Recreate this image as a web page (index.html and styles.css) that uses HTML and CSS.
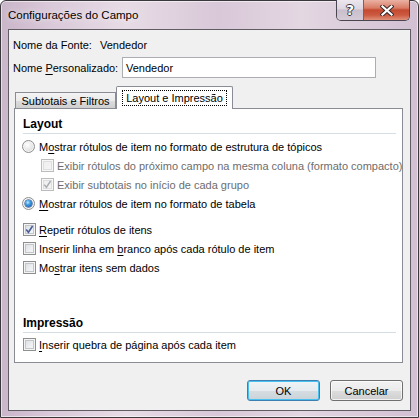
FILE: index.html
```html
<!DOCTYPE html>
<html lang="pt">
<head>
<meta charset="utf-8">
<title>Configurações do Campo</title>
<link rel="stylesheet" href="styles.css">
</head>
<body>
<div class="window">
  <div class="titlebar">
    <span class="title">Configurações do Campo</span>
    <div class="caption">
      <div class="cbtn help"><span class="q">?</span></div>
      <div class="cbtn close">
        <svg width="14" height="11" viewBox="0 0 14 11">
          <path d="M2.5 1.5 L11.5 9.5 M11.5 1.5 L2.5 9.5" stroke="#3a2a28" stroke-width="4.2" stroke-linecap="square" fill="none"/>
          <path d="M2.5 1.5 L11.5 9.5 M11.5 1.5 L2.5 9.5" stroke="#ffffff" stroke-width="2.2" stroke-linecap="square" fill="none"/>
        </svg>
      </div>
    </div>
  </div>
  <div class="client">
    <div class="row src">
      <span class="lbl">Nome da Fonte:</span>
      <span class="val">Vendedor</span>
    </div>
    <div class="row custom">
      <span class="lbl2">Nome <u>P</u>ersonalizado:</span>
      <div class="textbox">Vendedor</div>
    </div>
    <div class="tabs">
      <div class="tab">Subtotais e Filtros</div>
      <div class="tab active"><span class="focus">Layout e Impressão</span></div>
    </div>
    <div class="panel">
      <div class="group-title">Layout</div>
      <div class="opt first">
        <span class="rb"></span><span class="txt">M<u>o</u>strar rótulos de item no formato de estrutura de tópicos</span>
      </div>
      <div class="opt sub disabled">
        <span class="cb"></span><span class="txt">Exibir rótulos do próximo campo na mesma coluna (formato compacto)</span>
      </div>
      <div class="opt sub disabled">
        <span class="cb"><svg width="11" height="11" viewBox="0 0 11 11"><path d="M2.2 5.6 L4.4 8.3 L8.6 2" stroke="#a9acb0" stroke-width="1.5" fill="none"/></svg></span><span class="txt">Exibir subtotais no início de cada grupo</span>
      </div>
      <div class="opt">
        <span class="rb on"><span class="dot"></span></span><span class="txt"><u>M</u>ostrar rótulos de item no formato de tabela</span>
      </div>
      <div class="opt gap">
        <span class="cb"><svg width="11" height="11" viewBox="0 0 11 11"><path d="M2.2 5.6 L4.4 8.3 L8.6 2" stroke="#4a5f97" stroke-width="1.6" fill="none"/></svg></span><span class="txt"><u>R</u>epetir rótulos de itens</span>
      </div>
      <div class="opt">
        <span class="cb"></span><span class="txt">Inserir linha em <u>b</u>ranco após cada rótulo de item</span>
      </div>
      <div class="opt">
        <span class="cb"></span><span class="txt">Mo<u>s</u>trar itens sem dados</span>
      </div>
      <div class="group-title second">Impressão</div>
      <div class="opt after">
        <span class="cb"></span><span class="txt"><u>I</u>nserir quebra de página após cada item</span>
      </div>
    </div>
    <div class="buttons">
      <div class="btn default">OK</div>
      <div class="btn">Cancelar</div>
    </div>
  </div>
</div>
</body>
</html>
```
FILE: styles.css
```css
* { box-sizing: border-box; }
html, body { margin: 0; padding: 0; background: #ffffff; }
body {
  font-family: "Liberation Sans", Arial, sans-serif;
  font-size: 11px;
  color: #000;
  white-space: nowrap;
}
u { text-decoration: underline; text-underline-offset: 2px; }

.window {
  width: 419px;
  height: 418px;
  border: 1px solid #3a383c;
  border-radius: 6px 6px 0 0;
  background: linear-gradient(90deg, #c9b6c9 0%, #dac9d9 12%, #e7dce6 30%, #d9c8d8 52%, #e3d7e2 72%, #d2c0d2 100%);
  box-shadow: inset 0 0 0 1px rgba(255,255,255,0.55);
  display: flex;
  flex-direction: column;
}

.titlebar {
  height: 28px;
  display: flex;
  justify-content: space-between;
  align-items: flex-start;
  padding: 0 8px 0 7px;
}
.title {
  font-size: 11.5px;
  line-height: 28px;
  color: #000;
  text-shadow: 0 0 6px rgba(255,255,255,0.9);
}
.caption {
  display: flex;
  margin-top: -1px;
  border: 1px solid #4a4550;
  border-top: none;
  border-radius: 0 0 5px 5px;
  overflow: hidden;
}
.cbtn {
  height: 20px;
  display: flex;
  align-items: center;
  justify-content: center;
}
.help {
  width: 27px;
  border-right: 1px solid #6d6570;
  background: linear-gradient(180deg, #ece6ee 0%, #ddd5e0 45%, #c9bfcc 50%, #d4cbd7 100%);
}
.help .q {
  font-family: "DejaVu Sans", sans-serif;
  font-weight: bold;
  font-size: 14px;
  color: #fff;
  line-height: 1;
  text-shadow: 1px 0 0 #3d3540, -1px 0 0 #3d3540, 0 1px 0 #3d3540, 0 -1px 0 #3d3540;
}
.close {
  width: 45px;
  background: linear-gradient(180deg, #eab2a4 0%, #d97c66 40%, #c44a31 50%, #cc5a40 75%, #e0907a 100%);
}

.client {
  flex: 1;
  margin: 0 7px 6px 7px;
  border: 1px solid #5f5c63;
  background: #f0f0f0;
  padding: 4px 7px 0 5px;
  display: flex;
  flex-direction: column;
}

.row {
  height: 21px;
  display: flex;
  align-items: center;
  margin-left: -1px;
}
.row.custom { margin-top: 2px; }
.lbl { width: 87px; flex: none; }
.lbl2 { width: 109px; flex: none; }
.textbox {
  width: 254px;
  height: 21px;
  flex: none;
  border: 1px solid #abadb3;
  background: #fff;
  padding-left: 3px;
  display: flex;
  align-items: center;
}

.tabs {
  margin-top: 8px;
  height: 23px;
  margin-bottom: -1px;
  display: flex;
  align-items: flex-end;
  padding-left: 1px;
  position: relative;
  z-index: 1;
}
.tab {
  height: 16px;
  margin-bottom: 1px;
  width: 101px;
  flex: none;
  border: 1px solid #898c95;
  border-bottom: none;
  background: linear-gradient(180deg, #f3f3f3 0%, #ebebeb 50%, #dddddd 51%, #cfcfcf 100%);
  display: flex;
  align-items: center;
  justify-content: center;
}
.tab.active {
  width: 117px;
  height: 23px;
  margin-bottom: 0;
  background: #fff;
  border-radius: 2px 2px 0 0;
  padding-bottom: 1px;
}
.focus {
  outline: 1px dotted #000;
  outline-offset: 0;
  padding: 0 3px;
  line-height: 14px;
}

.panel {
  height: 255px;
  border: 1px solid #898c95;
  background: #fff;
  padding: 0 6px 0 8px;
  display: flex;
  flex-direction: column;
}
.group-title {
  margin-top: 6px;
  height: 19px;
  font-size: 12px;
  font-weight: bold;
  display: flex;
  align-items: center;
  border-bottom: 1px solid #d5dde5;
}
.group-title.second { margin-top: 37px; }

.opt {
  height: 19px;
  display: flex;
  align-items: center;
}
.opt .txt { flex: none; }
.opt.first { margin-top: 3px; }
.opt.gap { margin-top: 7px; }
.opt.after { margin-top: 2px; }
.opt.sub { padding-left: 18px; }
.opt.disabled { color: #6d6d6d; }

.cb {
  width: 13px;
  height: 13px;
  flex: none;
  margin-right: 3px;
  border: 1px solid #8e8f8f;
  background: linear-gradient(135deg, #d7dbe0 0%, #eceef0 55%, #fafafa 100%);
  box-shadow: inset 0 0 0 1px #f4f4f4, inset 0 0 0 2px #c2c6cb;
  display: flex;
  align-items: center;
  justify-content: center;
}
.disabled .cb {
  border-color: #bcbcbc;
  background: linear-gradient(135deg, #ecedee 0%, #f6f6f6 100%);
  box-shadow: inset 0 0 0 1px #f7f7f7, inset 0 0 0 2px #dcdee0;
}
.rb {
  width: 13px;
  height: 13px;
  flex: none;
  margin-right: 4px;
  margin-left: -1px;
  border-radius: 50%;
  border: 1px solid #8e8f8f;
  background: radial-gradient(circle at 40% 35%, #ffffff 0%, #e9e9e9 45%, #cfd1d4 100%);
  box-shadow: inset 0 0 0 1px #f6f6f6;
  display: flex;
  align-items: center;
  justify-content: center;
}
.rb .dot {
  width: 7px;
  height: 7px;
  border-radius: 50%;
  background: radial-gradient(circle at 40% 35%, #bfeaff 0%, #3c9ae0 40%, #11479c 100%);
  box-shadow: 0 0 0 0.5px #0f3f86;
}

.buttons {
  margin-top: 17px;
  display: flex;
  justify-content: flex-end;
  gap: 10px;
}
.btn {
  width: 73px;
  height: 21px;
  border: 1px solid #707070;
  border-radius: 3px;
  background: linear-gradient(180deg, #f2f2f2 0%, #ebebeb 50%, #dddddd 51%, #cfcfcf 100%);
  box-shadow: inset 0 0 0 1px rgba(255,255,255,0.7);
  display: flex;
  align-items: center;
  justify-content: center;
}
.btn.default {
  border-color: #3c7fb1;
  box-shadow: inset 0 0 0 1px #49c1f0;
  background: linear-gradient(180deg, #eef3f6 0%, #e5ebee 50%, #d6dee3 51%, #c9d2d8 100%);
}
```
